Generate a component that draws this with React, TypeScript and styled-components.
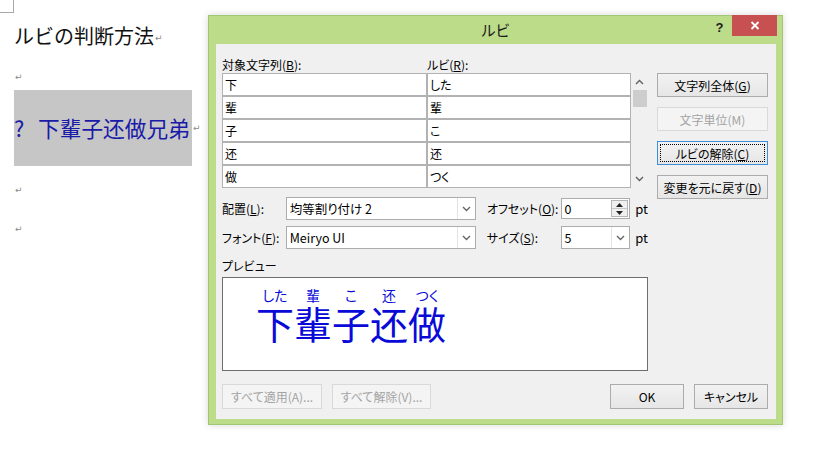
import React from "react";
import styled, { createGlobalStyle } from "styled-components";

const GlobalStyle = createGlobalStyle`
  html, body { margin: 0; padding: 0; background: #ffffff; }
  body {
    width: 813px; height: 454px; overflow: hidden;
    font-family: "Noto Sans CJK JP", "Noto Sans", sans-serif;
  }
  #root { width: 813px; height: 454px; }
`;

const Page = styled.div`
  position: relative;
  width: 813px;
  height: 454px;
  background: #fff;
`;

/* ---------- Word document behind ---------- */
const Doc = styled.div`
  display: flex;
  flex-direction: column;
  align-items: flex-start;
`;

const CropMark = styled.div`
  width: 14px;
  height: 13px;
  box-sizing: border-box;
  border-right: 1px solid #a8a8a8;
  border-bottom: 1px solid #a8a8a8;
`;

const Heading = styled.div`
  margin: 12px 0 0 14px;
  height: 22px;
  display: flex;
  align-items: flex-end;
  font-size: 20px;
  line-height: 22px;
  color: #111;
  white-space: nowrap;
`;

const Pilcrow = styled.span<{ $mb?: number }>`
  font-family: "DejaVu Sans", sans-serif;
  font-size: 9px;
  line-height: 9px;
  color: #8a8a8a;
  margin-left: 1px;
  margin-bottom: ${(p) => p.$mb ?? 0}px;
`;

const EmptyPara = styled.div<{ $mt: number }>`
  margin: ${(p) => p.$mt}px 0 0 14px;
  height: 20px;
  display: flex;
  align-items: center;
`;

const HighlightRow = styled.div`
  margin: 3px 0 0 14px;
  display: flex;
  align-items: center;
`;

const Highlight = styled.div`
  width: 178px;
  height: 76px;
  background: #c6c6c6;
  display: flex;
  align-items: center;
  font-size: 21.7px;
  line-height: 24px;
  color: #1a1aa8;
  white-space: nowrap;
`;

const Question = styled.span`
  display: inline-block;
  width: 24px;
`;

/* ---------- Dialog ---------- */
const Dialog = styled.div`
  position: absolute;
  left: 208px;
  top: 15px;
  width: 575px;
  height: 410px;
  box-sizing: border-box;
  background: #bcdc8a;
  border: 1px solid #a3c672;
  box-shadow: 0 0 7px rgba(0, 0, 0, 0.16);
  display: flex;
  flex-direction: column;
  font-family: "Noto Sans CJK JP", "Noto Sans", sans-serif;
  font-feature-settings: "palt";
`;

const TitleBar = styled.div`
  height: 28px;
  display: grid;
  grid-template-columns: 1fr auto 1fr;
  align-items: start;
`;

const Title = styled.div`
  grid-column: 2;
  font-size: 15px;
  line-height: 28px;
  color: #1a1a1a;
`;

const TitleActions = styled.div`
  grid-column: 3;
  justify-self: end;
  display: flex;
  align-items: flex-start;
  margin-top: -1px;
  padding-right: 5px;
`;

const HelpButton = styled.div`
  width: 25px;
  height: 24px;
  display: flex;
  align-items: center;
  justify-content: center;
  font-family: "Liberation Sans", sans-serif;
  font-weight: bold;
  font-size: 13px;
  color: #1a1a1a;
`;

const CloseButton = styled.div`
  width: 45px;
  height: 21px;
  background: #c75050;
  display: flex;
  align-items: center;
  justify-content: center;
`;

const Client = styled.div`
  flex: 1;
  margin: 0 6px 5px 7px;
  background: #f0f0f0;
  box-sizing: border-box;
  padding: 13px 8px 10px 6px;
  display: flex;
  flex-direction: column;
  font-size: 12px;
  color: #000;
`;

const TopSection = styled.div`
  display: flex;
  align-items: flex-start;
  gap: 9px;
`;

const LeftCol = styled.div`
  width: 426px;
  display: flex;
  flex-direction: column;
`;

const LabelsRow = styled.div`
  display: flex;
  height: 16px;
  line-height: 16px;
`;

const ColLabel = styled.div<{ $w?: number }>`
  width: ${(p) => (p.$w ? `${p.$w}px` : "auto")};
  white-space: nowrap;
`;

const Mn = styled.span`
  text-decoration: underline;
  text-underline-offset: 1px;
`;

const TableRow = styled.div`
  display: flex;
  height: 115px;
`;

const Table = styled.div`
  width: 409px;
  box-sizing: border-box;
  display: grid;
  grid-template-columns: 203px 202px;
  grid-auto-rows: 21px;
  gap: 2px;
  padding: 1px;
  background: #b2b2b2;
`;

const Cell = styled.div`
  background: #fff;
  padding-left: 2px;
  line-height: 21px;
  font-size: 12px;
  white-space: nowrap;
`;

const Scrollbar = styled.div`
  width: 17px;
  display: flex;
  flex-direction: column;
  align-items: center;
  padding: 6px 0 6px 0;
  box-sizing: border-box;
`;

const Thumb = styled.div`
  margin-top: 5px;
  width: 14px;
  height: 17px;
  background: #cdcdcd;
`;

const Spacer = styled.div`
  flex: 1;
`;

const ButtonCol = styled.div`
  width: 111px;
  display: flex;
  flex-direction: column;
  gap: 10px;
  padding-top: 16px;
`;

const Button = styled.div<{ $w?: number; $h?: number; $disabled?: boolean; $focused?: boolean }>`
  position: relative;
  width: ${(p) => (p.$w ? `${p.$w}px` : "100%")};
  height: ${(p) => p.$h ?? 24}px;
  box-sizing: border-box;
  display: flex;
  align-items: center;
  justify-content: center;
  font-size: 12px;
  white-space: nowrap;
  color: ${(p) => (p.$disabled ? "#a3a3a3" : "#000")};
  border: 1px solid ${(p) => (p.$disabled ? "#d9d9d9" : p.$focused ? "#3c8fd8" : "#acacac")};
  background: ${(p) =>
    p.$disabled ? "#f4f4f4" : "linear-gradient(#f2f2f2, #e6e6e6)"};
  ${(p) =>
    p.$focused
      ? `&::after { content: ""; position: absolute; inset: 2px; border: 1px dotted #000; }`
      : ""}
`;

const FormRow = styled.div<{ $mt: number }>`
  margin-top: ${(p) => p.$mt}px;
  height: 23px;
  display: flex;
  align-items: center;
`;

const FormLabel = styled.div<{ $w: number; $ml?: number }>`
  width: ${(p) => p.$w}px;
  margin-left: ${(p) => p.$ml ?? 0}px;
  white-space: nowrap;
`;

const Combo = styled.div<{ $w: number; $h?: number }>`
  width: ${(p) => p.$w}px;
  height: ${(p) => p.$h ?? 23}px;
  box-sizing: border-box;
  border: 1px solid #acacac;
  background: #fff;
  display: flex;
`;

const ComboText = styled.div`
  flex: 1;
  padding-left: 3px;
  display: flex;
  align-items: center;
  font-size: 12.5px;
  white-space: nowrap;
`;

const ComboButton = styled.div`
  width: 17px;
  border-left: 1px solid #e3e3e3;
  display: flex;
  align-items: center;
  justify-content: center;
`;

const SpinButtons = styled.div`
  width: 15px;
  margin: 1px 1px 1px 0;
  display: flex;
  flex-direction: column;
  border: 1px solid #b5b5b5;
  background: #f0f0f0;
`;

const SpinHalf = styled.div<{ $top?: boolean }>`
  flex: 1;
  display: flex;
  align-items: center;
  justify-content: center;
  border-bottom: ${(p) => (p.$top ? "1px solid #c8c8c8" : "none")};
`;

const Unit = styled.div`
  margin-left: 5px;
  font-size: 13px;
`;

const PreviewLabel = styled.div`
  margin-top: 9px;
  height: 16px;
  line-height: 16px;
`;

const PreviewBox = styled.div`
  margin-top: 3px;
  width: 426px;
  height: 94px;
  box-sizing: border-box;
  border: 1px solid #6e6e6e;
  background: #fff;
  padding: 9px 0 0 33px;
  display: flex;
  align-items: flex-start;
`;

const RubyUnit = styled.div`
  display: flex;
  flex-direction: column;
  align-items: stretch;
  color: #0a0ad8;
`;

const RubyText = styled.div`
  display: flex;
  justify-content: center;
  font-size: 14px;
  line-height: 16px;
  height: 16px;
`;

const RubyBase = styled.div`
  font-size: 38px;
  line-height: 40px;
  height: 40px;
  text-align: center;
`;

const BottomRow = styled.div`
  margin-top: 13px;
  display: flex;
  justify-content: space-between;
`;

const Group = styled.div`
  display: flex;
  gap: 10px;
`;

const Chevron = ({ up = false, color = "#555" }: { up?: boolean; color?: string }) => (
  <svg width="9" height="6" viewBox="0 0 9 6">
    <polyline
      points={up ? "1,5 4.5,1.5 8,5" : "1,1 4.5,4.5 8,1"}
      fill="none"
      stroke={color}
      strokeWidth="1.4"
    />
  </svg>
);

const Tri = ({ up = false }: { up?: boolean }) => (
  <svg width="7" height="4" viewBox="0 0 7 4">
    <polygon points={up ? "0,4 3.5,0 7,4" : "0,0 7,0 3.5,4"} fill="#222" />
  </svg>
);

const rows: [string, string][] = [
  ["下", "した"],
  ["輩", "輩"],
  ["子", "こ"],
  ["还", "还"],
  ["做", "つく"],
];

export default function App() {
  return (
    <Page>
      <GlobalStyle />
      <Doc>
        <CropMark />
        <Heading>
          ルビの判断方法<Pilcrow $mb={4}>↵</Pilcrow>
        </Heading>
        <EmptyPara $mt={20}>
          <Pilcrow>↵</Pilcrow>
        </EmptyPara>
        <HighlightRow>
          <Highlight>
            <Question>?</Question>下輩子还做兄弟
          </Highlight>
          <Pilcrow>↵</Pilcrow>
        </HighlightRow>
        <EmptyPara $mt={14}>
          <Pilcrow>↵</Pilcrow>
        </EmptyPara>
        <EmptyPara $mt={19}>
          <Pilcrow>↵</Pilcrow>
        </EmptyPara>
      </Doc>

      <Dialog>
        <TitleBar>
          <Title>ルビ</Title>
          <TitleActions>
            <HelpButton>?</HelpButton>
            <CloseButton>
              <svg width="10" height="9" viewBox="0 0 10 9">
                <path d="M1.5 1 L8.5 8 M8.5 1 L1.5 8" stroke="#fff" strokeWidth="1.8" />
              </svg>
            </CloseButton>
          </TitleActions>
        </TitleBar>
        <Client>
          <TopSection>
            <LeftCol>
              <LabelsRow>
                <ColLabel $w={205}>
                  対象文字列(<Mn>B</Mn>):
                </ColLabel>
                <ColLabel>
                  ルビ(<Mn>R</Mn>):
                </ColLabel>
              </LabelsRow>
              <TableRow>
                <Table>
                  {rows.map(([a, b]) => (
                    <React.Fragment key={a}>
                      <Cell>{a}</Cell>
                      <Cell>{b}</Cell>
                    </React.Fragment>
                  ))}
                </Table>
                <Scrollbar>
                  <Chevron up color="#606060" />
                  <Thumb />
                  <Spacer />
                  <Chevron color="#606060" />
                </Scrollbar>
              </TableRow>

              <FormRow $mt={9}>
                <FormLabel $w={64}>
                  配置(<Mn>L</Mn>):
                </FormLabel>
                <Combo $w={191}>
                  <ComboText>均等割り付け 2</ComboText>
                  <ComboButton>
                    <Chevron color="#666" />
                  </ComboButton>
                </Combo>
                <FormLabel $w={74} $ml={11}>
                  オフセット(<Mn>O</Mn>):
                </FormLabel>
                <Combo $w={70} $h={21}>
                  <ComboText>0</ComboText>
                  <SpinButtons>
                    <SpinHalf $top>
                      <Tri up />
                    </SpinHalf>
                    <SpinHalf>
                      <Tri />
                    </SpinHalf>
                  </SpinButtons>
                </Combo>
                <Unit>pt</Unit>
              </FormRow>
              <FormRow $mt={6}>
                <FormLabel $w={64}>
                  フォント(<Mn>F</Mn>):
                </FormLabel>
                <Combo $w={191}>
                  <ComboText>Meiryo UI</ComboText>
                  <ComboButton>
                    <Chevron color="#666" />
                  </ComboButton>
                </Combo>
                <FormLabel $w={74} $ml={11}>
                  サイズ(<Mn>S</Mn>):
                </FormLabel>
                <Combo $w={70}>
                  <ComboText>5</ComboText>
                  <ComboButton>
                    <Chevron color="#666" />
                  </ComboButton>
                </Combo>
                <Unit>pt</Unit>
              </FormRow>

              <PreviewLabel>プレビュー</PreviewLabel>
              <PreviewBox>
                {rows.map(([base, ruby]) => (
                  <RubyUnit key={base}>
                    <RubyText>{ruby}</RubyText>
                    <RubyBase>{base}</RubyBase>
                  </RubyUnit>
                ))}
              </PreviewBox>
            </LeftCol>
            <ButtonCol>
              <Button>
                文字列全体(<Mn>G</Mn>)
              </Button>
              <Button $disabled>文字単位(M)</Button>
              <Button $focused>
                ルビの解除(<Mn>C</Mn>)
              </Button>
              <Button>
                変更を元に戻す(<Mn>D</Mn>)
              </Button>
            </ButtonCol>
          </TopSection>

          <BottomRow>
            <Group>
              <Button $disabled $w={100} $h={25}>
                すべて適用(A)...
              </Button>
              <Button $disabled $w={99} $h={25}>
                すべて解除(V)...
              </Button>
            </Group>
            <Group>
              <Button $w={74} $h={25}>
                OK
              </Button>
              <Button $w={74} $h={25}>
                キャンセル
              </Button>
            </Group>
          </BottomRow>
        </Client>
      </Dialog>
    </Page>
  );
}
